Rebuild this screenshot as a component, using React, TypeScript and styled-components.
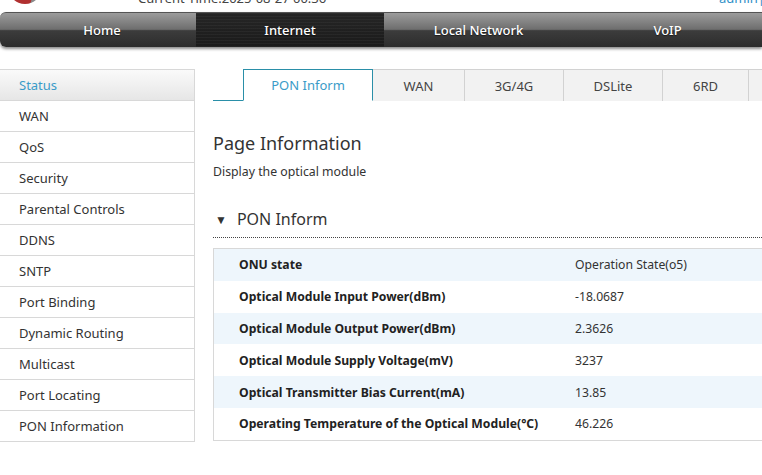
import React from "react";
import styled, { createGlobalStyle } from "styled-components";

const Global = createGlobalStyle`
  html, body { margin: 0; padding: 0; background: #fff; overflow: hidden; }
  body { font-family: "Noto Sans", "Open Sans", sans-serif; color: #333; width: 762px; height: 475px; }
`;

const Page = styled.div`
  width: 762px;
  height: 475px;
  overflow: hidden;
  display: flex;
  flex-direction: column;
`;

const Header = styled.div`
  height: 12px;
  position: relative;
  overflow: hidden;
`;

const Logo = styled.div`
  position: absolute;
  left: 8px;
  top: -30px;
  width: 34px;
  height: 34px;
  border-radius: 50%;
  background: radial-gradient(circle at 40% 80%, #b03030 0 30%, #8a8a8a 31% 100%);
`;

const TimeText = styled.div`
  position: absolute;
  left: 138px;
  top: -11px;
  font-size: 13px;
  color: #444;
  white-space: nowrap;
`;

const AdminLink = styled.div`
  position: absolute;
  left: 719px;
  top: -11px;
  font-size: 13px;
  color: #2f8fc7;
  white-space: nowrap;
`;

const Nav = styled.div`
  height: 34px;
  display: flex;
  border-radius: 6px 0 0 6px;
  overflow: hidden;
  box-shadow: 0 2px 3px rgba(0, 0, 0, 0.45);
  background: linear-gradient(#9c9c9c 0%, #6e6e6e 48%, #3c3c3c 52%, #2c2c2c 100%);
  border-top: 1px solid #555;
`;

const NavItem = styled.div<{ $w: number; $active?: boolean; $pad?: number }>`
  width: ${(p) => p.$w}px;
  flex: none;
  box-sizing: border-box;
  padding-left: ${(p) => p.$pad || 0}px;
  padding-bottom: 1px;
  display: flex;
  align-items: center;
  justify-content: center;
  color: #fff;
  font-size: 13px;
  font-weight: 500;
  text-shadow: 0 1px 1px rgba(0, 0, 0, 0.5);
  ${(p) =>
    p.$active &&
    `
    background:
      repeating-linear-gradient(0deg, rgba(255,255,255,0.04) 0 1px, transparent 1px 3px),
      linear-gradient(#262626, #1a1a1a);
  `}
`;

const Body = styled.div`
  display: flex;
  margin-top: 22px;
  gap: 18px;
`;

const Sidebar = styled.div`
  width: 195px;
  box-sizing: border-box;
  flex: none;
  border-top: 1px solid #d8d8d8;
  border-right: 1px solid #d8d8d8;
  border-bottom: 1px solid #d8d8d8;
  display: flex;
  flex-direction: column;
`;

const SideItem = styled.div<{ $active?: boolean }>`
  height: 30px;
  display: flex;
  align-items: center;
  padding-left: 19px;
  font-size: 13px;
  color: ${(p) => (p.$active ? "#3a9bc8" : "#333")};
  background: ${(p) => (p.$active ? "linear-gradient(#fafafa, #e6e6e6)" : "#fff")};
  & + & { border-top: 1px solid #d8d8d8; }
`;

const Main = styled.div`
  flex: 1;
  display: flex;
  flex-direction: column;
  min-width: 0;
`;

const Tabs = styled.div`
  display: flex;
  padding-left: 30px;
  border-bottom: 1px solid #2a8fa8;
  height: 31px;
  white-space: nowrap;
`;

const Tab = styled.div<{ $w: number; $active?: boolean }>`
  width: ${(p) => p.$w}px;
  flex: none;
  box-sizing: border-box;
  display: flex;
  align-items: center;
  justify-content: center;
  font-size: 13px;
  margin-bottom: -1px;
  color: ${(p) => (p.$active ? "#3a9bc8" : "#444")};
  background: ${(p) => (p.$active ? "#fff" : "#f2f2f2")};
  border: 1px solid ${(p) => (p.$active ? "#2a8fa8" : "#d2d2d2")};
  border-bottom: ${(p) => (p.$active ? "1px solid #fff" : "none")};
  ${(p) => (!p.$active ? "border-left: none;" : "")}
`;

const Title = styled.div`
  margin-top: 30px;
  font-size: 18px;
  color: #333;
  line-height: 24px;
`;

const Subtitle = styled.div`
  margin-top: 8px;
  font-size: 12.3px;
  color: #333;
  line-height: 18px;
`;

const SectionHead = styled.div`
  margin-top: 24px;
  display: flex;
  align-items: center;
  gap: 10px;
  height: 28px;
  font-size: 16px;
  color: #333;
  border-bottom: 1px dotted #444;
  padding-bottom: 4px;
`;

const Arrow = styled.span`
  font-size: 12px;
  padding-left: 2px;
`;

const Table = styled.div`
  margin-top: 10px;
  border: 1px solid #d8d8d8;
  width: 600px;
  display: flex;
  flex-direction: column;
`;

const Row = styled.div<{ $alt?: boolean }>`
  height: 31.8px;
  display: grid;
  grid-template-columns: 336px 1fr;
  align-items: center;
  padding-left: 25px;
  font-size: 12.2px;
  background: ${(p) => (p.$alt ? "#eef6fc" : "#fff")};
`;

const Label = styled.div`
  font-weight: 700;
  color: #222;
`;

const Value = styled.div`
  color: #333;
`;

const navItems = [
  { t: "Home", w: 196, pad: 8 },
  { t: "Internet", w: 188, a: true },
  { t: "Local Network", w: 189 },
  { t: "VoIP", w: 189 },
];

const side = [
  "Status",
  "WAN",
  "QoS",
  "Security",
  "Parental Controls",
  "DDNS",
  "SNTP",
  "Port Binding",
  "Dynamic Routing",
  "Multicast",
  "Port Locating",
  "PON Information",
];

const tabs = [
  { t: "PON Inform", w: 130, a: true },
  { t: "WAN", w: 92 },
  { t: "3G/4G", w: 99 },
  { t: "DSLite", w: 99 },
  { t: "6RD", w: 86 },
  { t: "", w: 60 },
];

const rows = [
  ["ONU state", "Operation State(o5)"],
  ["Optical Module Input Power(dBm)", "-18.0687"],
  ["Optical Module Output Power(dBm)", "2.3626"],
  ["Optical Module Supply Voltage(mV)", "3237"],
  ["Optical Transmitter Bias Current(mA)", "13.85"],
  ["Operating Temperature of the Optical Module(°C)", "46.226"],
];

export default function App() {
  return (
    <>
      <Global />
      <Page>
        <Header>
          <Logo />
          <TimeText>Current Time:2025-08-27 00:36</TimeText>
          <AdminLink>admin|Logout</AdminLink>
        </Header>
        <Nav>
          {navItems.map((n) => (
            <NavItem key={n.t} $w={n.w} $active={n.a} $pad={n.pad}>
              {n.t}
            </NavItem>
          ))}
        </Nav>
        <Body>
          <Sidebar>
            {side.map((s, i) => (
              <SideItem key={s} $active={i === 0}>
                {s}
              </SideItem>
            ))}
          </Sidebar>
          <Main>
            <Tabs>
              {tabs.map((t, i) => (
                <Tab key={i} $w={t.w} $active={t.a}>
                  {t.t}
                </Tab>
              ))}
            </Tabs>
            <Title>Page Information</Title>
            <Subtitle>Display the optical module</Subtitle>
            <SectionHead>
              <Arrow>▼</Arrow>
              PON Inform
            </SectionHead>
            <Table>
              {rows.map((r, i) => (
                <Row key={i} $alt={i % 2 === 0}>
                  <Label>{r[0]}</Label>
                  <Value>{r[1]}</Value>
                </Row>
              ))}
            </Table>
          </Main>
        </Body>
      </Page>
    </>
  );
}
